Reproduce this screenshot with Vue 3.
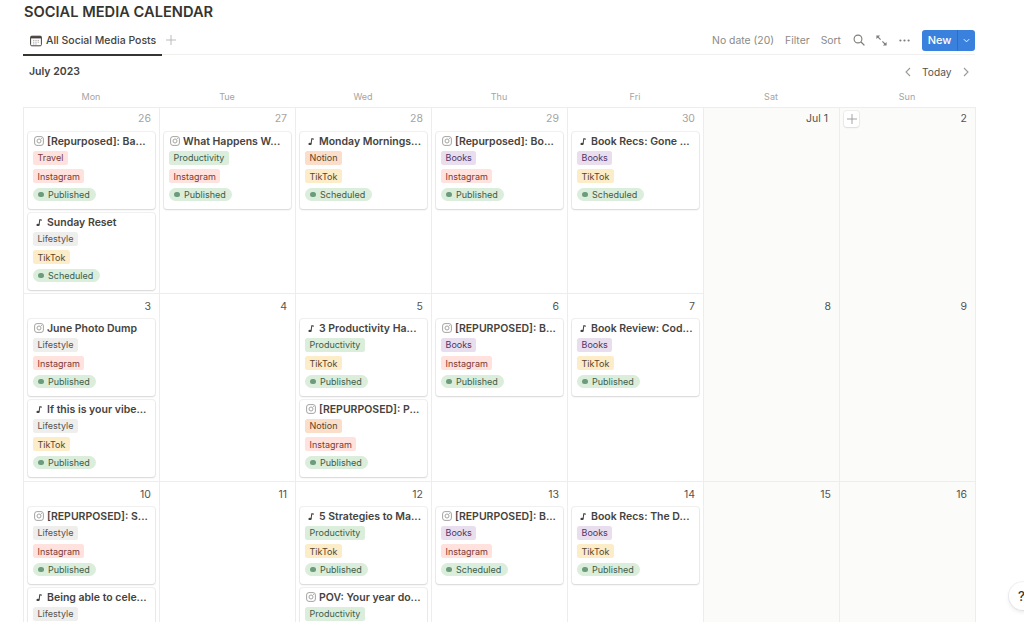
<script setup>
const p = (kind, title, topic, status = 'Published', channel = null) => ({
  kind, title, topic, status,
  channel: channel === null ? (kind === 'ig' ? 'Instagram' : 'TikTok') : channel
})

const tagClass = {
  Travel: 'red', Instagram: 'red', Productivity: 'green', Notion: 'orange',
  TikTok: 'yellow', Books: 'purple', Lifestyle: 'gray'
}

const weeks = [
  [
    { n: '26', muted: true, posts: [p('ig', '[Repurposed]: Ba...', 'Travel'), p('tt', 'Sunday Reset', 'Lifestyle', 'Scheduled')] },
    { n: '27', muted: true, posts: [p('ig', 'What Happens W...', 'Productivity')] },
    { n: '28', muted: true, posts: [p('tt', 'Monday Mornings...', 'Notion', 'Scheduled')] },
    { n: '29', muted: true, posts: [p('ig', '[Repurposed]: Bo...', 'Books')] },
    { n: '30', muted: true, posts: [p('tt', 'Book Recs: Gone ...', 'Books', 'Scheduled')] },
    { n: 'Jul 1', first: true, posts: [] },
    { n: '2', posts: [], add: true }
  ],
  [
    { n: '3', posts: [p('ig', 'June Photo Dump', 'Lifestyle'), p('tt', 'If this is your vibe...', 'Lifestyle')] },
    { n: '4', posts: [] },
    { n: '5', posts: [p('tt', '3 Productivity Ha...', 'Productivity'), p('ig', '[REPURPOSED]: P...', 'Notion')] },
    { n: '6', posts: [p('ig', '[REPURPOSED]: B...', 'Books')] },
    { n: '7', posts: [p('tt', 'Book Review: Cod...', 'Books')] },
    { n: '8', posts: [] },
    { n: '9', posts: [] }
  ],
  [
    { n: '10', posts: [p('ig', '[REPURPOSED]: S...', 'Lifestyle'), p('tt', 'Being able to cele...', 'Lifestyle', '', '')] },
    { n: '11', posts: [] },
    { n: '12', posts: [p('tt', '5 Strategies to Ma...', 'Productivity'), p('ig', 'POV: Your year do...', 'Productivity', '', '')] },
    { n: '13', posts: [p('ig', '[REPURPOSED]: B...', 'Books', 'Scheduled')] },
    { n: '14', posts: [p('tt', 'Book Recs: The D...', 'Books')] },
    { n: '15', posts: [] },
    { n: '16', posts: [] }
  ]
]
const days = ['Mon', 'Tue', 'Wed', 'Thu', 'Fri', 'Sat', 'Sun']
</script>

<template>
  <div class="page">
    <h1 class="title">SOCIAL MEDIA CALENDAR</h1>

    <div class="tabs">
      <div class="tab">
        <svg class="tab-icon" viewBox="0 0 12 12" width="12" height="12">
          <rect x="0.6" y="1.2" width="10.8" height="9.6" rx="1.2" fill="none" stroke="#45433e" stroke-width="1" />
          <rect x="0.6" y="1.2" width="10.8" height="2.2" fill="#45433e" />
          <path d="M3 5.4h1.4M5.3 5.4h1.4M7.6 5.4H9M3 7.2h1.4M5.3 7.2h1.4M7.6 7.2H9M3 9h1.4M5.3 9h1.4" stroke="#a9a8a5" stroke-width="0.9" />
        </svg>
        <span>All Social Media Posts</span>
      </div>
      <svg class="tab-plus" viewBox="0 0 10 10" width="10" height="10">
        <path d="M5 0v10M0 5h10" stroke="#b4b3b0" stroke-width="0.9" />
      </svg>
      <div class="tools">
        <span class="tool first">No date (20)</span>
        <span class="tool">Filter</span>
        <span class="tool">Sort</span>
        <svg class="ico search" viewBox="0 0 12 12" width="12" height="12">
          <circle cx="5" cy="5" r="3.9" fill="none" stroke="#7d7c78" stroke-width="1.1" />
          <path d="M8 8l3.4 3.4" stroke="#7d7c78" stroke-width="1.3" />
        </svg>
        <svg class="ico expand" viewBox="0 0 11 11" width="11" height="11">
          <path d="M1.5 1.5l3.1 3.1M6.4 6.4l3.1 3.1" stroke="#7d7c78" stroke-width="1.1" />
          <path d="M0.4 4.1V0.4h3.7zM10.6 6.9v3.7H6.9z" fill="#7d7c78" />
        </svg>
        <svg class="ico dots" viewBox="0 0 11 3" width="11" height="3">
          <circle cx="1.4" cy="1.5" r="1.1" fill="#7d7c78" />
          <circle cx="5.5" cy="1.5" r="1.1" fill="#7d7c78" />
          <circle cx="9.6" cy="1.5" r="1.1" fill="#7d7c78" />
        </svg>
        <div class="new">
          <span class="new-label">New</span>
          <span class="new-arrow">
            <svg viewBox="0 0 8 5" width="7" height="5">
              <path d="M1 1l3 3 3-3" fill="none" stroke="#fff" stroke-width="1.1" />
            </svg>
          </span>
        </div>
      </div>
    </div>

    <div class="month-row">
      <span class="month">July 2023</span>
      <div class="nav">
        <svg viewBox="0 0 6 10" width="6" height="10"><path d="M5 1L1 5l4 4" fill="none" stroke="#9b9a97" stroke-width="1.1" /></svg>
        <span class="today">Today</span>
        <svg viewBox="0 0 6 10" width="6" height="10"><path d="M1 1l4 4-4 4" fill="none" stroke="#9b9a97" stroke-width="1.1" /></svg>
      </div>
    </div>

    <div class="dow">
      <span v-for="d in days" :key="d">{{ d }}</span>
    </div>

    <div class="calendar">
      <div v-for="(week, w) in weeks" :key="w" class="week">
        <div v-for="(cell, c) in week" :key="cell.n" class="cell" :class="{ weekend: c > 4 }">
          <button v-if="cell.add" class="add" type="button">
            <svg viewBox="0 0 10 10" width="10" height="10"><path d="M5 0v10M0 5h10" stroke="#9b9a97" stroke-width="0.9" /></svg>
          </button>
          <div class="num" :class="{ muted: cell.muted, 'month-start': cell.first }">{{ cell.n }}</div>
          <div v-for="post in cell.posts" :key="post.title" class="card">
            <div class="card-title">
              <svg v-if="post.kind === 'ig'" class="kind" viewBox="0 0 10 10" width="10" height="10">
                <rect x="0.6" y="0.6" width="8.8" height="8.8" rx="2.4" fill="none" stroke="#9b9a97" stroke-width="0.9" />
                <circle cx="5" cy="5" r="2" fill="none" stroke="#9b9a97" stroke-width="0.9" />
                <circle cx="7.4" cy="2.6" r="0.5" fill="#9b9a97" />
              </svg>
              <svg v-else class="kind" viewBox="0 0 10 10" width="10" height="10">
                <path d="M4.6 7.8L5.3 2.2C6.1 2.2 7 2.3 7.8 2.6L7.6 3.9C7 3.7 6.5 3.6 6.2 3.6L5.6 7.9Z" fill="#45433e" />
                <ellipse cx="4" cy="7.9" rx="1.6" ry="1.2" fill="#45433e" />
              </svg>
              <span>{{ post.title }}</span>
            </div>
            <div class="props">
              <span class="tag" :class="tagClass[post.topic]">{{ post.topic }}</span>
              <span v-if="post.channel" class="tag" :class="tagClass[post.channel]">{{ post.channel }}</span>
              <span v-if="post.status" class="status"><i class="dot"></i>{{ post.status }}</span>
            </div>
          </div>
        </div>
      </div>
    </div>

    <div class="help">?</div>
  </div>
</template>

<style scoped>
.page {
  position: relative;
  width: 1024px;
  height: 622px;
  overflow: hidden;
  box-sizing: border-box;
  padding: 0 49px 0 23px;
  background: #fff;
  color: #37352f;
  font-family: Inter, "Liberation Sans", sans-serif;
}
.title {
  margin: 0 0 0 1px;
  height: 29px;
  font-size: 14.65px;
  line-height: 24px;
  font-weight: 600;
  letter-spacing: 0;
}
.tabs {
  display: flex;
  align-items: center;
  height: 26px;
  box-sizing: border-box;
  padding-bottom: 3px;
  border-bottom: 1.5px solid #f0f0ef;
}
.tab {
  display: flex;
  align-items: center;
  gap: 4px;
  align-self: stretch;
  width: 139px;
  box-sizing: border-box;
  padding: 0 0 1px 7px;
  margin-bottom: -4.5px;
  border-bottom: 2px solid #37352f;
  font-size: 10.5px;
  font-weight: 500;
  color: #45433e;
  white-space: nowrap;
}
.tab-plus { margin-left: 4px; }
.tools {
  margin-left: auto;
  display: flex;
  align-items: center;
  font-size: 10.4px;
  color: #8b8a86;
}
.tool { margin-right: 11px; white-space: nowrap; }
.ico { flex: none; }
.search { margin: 0 0 0 1px; }
.expand { margin-left: 11px; }
.dots { margin-left: 12px; }
.new {
  display: flex;
  align-items: stretch;
  height: 21px;
  width: 53px;
  margin-left: 12px;
  border-radius: 3px;
  background: #3a81dd;
  color: #fff;
  font-size: 11px;
  font-weight: 500;
}
.new-label {
  width: 35px;
  display: flex;
  align-items: center;
  justify-content: center;
  border-right: 1px solid #2f6fc2;
}
.new-arrow {
  flex: 1;
  display: flex;
  align-items: center;
  justify-content: center;
}
.month-row {
  display: flex;
  align-items: center;
  justify-content: space-between;
  height: 33px;
  padding: 0 6px 0 6px;
}
.month { font-size: 10.5px; font-weight: 600; color: #45433e; }
.nav {
  display: flex;
  align-items: center;
  gap: 11.5px;
  font-size: 10.2px;
  color: #55534e;
}
.dow {
  display: grid;
  grid-template-columns: repeat(7, 136px);
  height: 19px;
  font-size: 9px;
  line-height: 17px;
  color: #a5a4a1;
  text-align: center;
}
.calendar {
  border-top: 1px solid #ededec;
  border-right: 1px solid #ededec;
  box-sizing: border-box;
  width: 953px;
}
.week {
  display: grid;
  grid-template-columns: repeat(7, 136px);
  height: 188px;
  border-bottom: 1px solid #ededec;
  box-sizing: border-box;
}
.week:first-child { height: 186px; }
.cell {
  position: relative;
  border-left: 1px solid #ededec;
  padding: 0 4px;
  min-width: 0;
}
.weekend { background: #fbfbfa; }
.num {
  height: 24.5px;
  padding-right: 4px;
  font-size: 10.5px;
  line-height: 26px;
  text-align: right;
  color: #55534e;
}
.week:first-child .num { height: 23.5px; line-height: 21px; }
.muted { color: #a5a4a1; }
.num.month-start { padding-right: 7px; }
.add {
  position: absolute;
  left: 4px;
  top: 3px;
  width: 15px;
  height: 15.5px;
  padding: 0;
  display: flex;
  align-items: center;
  justify-content: center;
  background: #fff;
  border: 0;
  border-radius: 3px;
  box-shadow: 0 0 0 1px rgba(15, 15, 15, 0.05), 0 1px 2px rgba(15, 15, 15, 0.08);
}
.card {
  box-sizing: border-box;
  height: 77px;
  margin-bottom: 4px;
  padding: 0 5px;
  border-radius: 3px;
  background: #fff;
  box-shadow: 0 0 0 1px rgba(15, 15, 15, 0.06), 0 1px 2px rgba(15, 15, 15, 0.12);
}
.card-title {
  display: flex;
  align-items: center;
  height: 19.5px;
  padding-left: 1px;
  font-size: 10.5px;
  font-weight: 600;
  color: #45433e;
  white-space: nowrap;
}
.kind { flex: none; margin-right: 3px; }
.props {
  display: flex;
  flex-direction: column;
  align-items: flex-start;
  gap: 4.75px;
}
.tag, .status {
  display: flex;
  align-items: center;
  height: 13.5px;
  padding: 0 4.5px;
  border-radius: 2.5px;
  font-size: 9px;
  white-space: nowrap;
}
.red { background: #ffe2dd; color: #7a3b36; }
.green { background: #dbeddb; color: #3d5c4a; }
.orange { background: #fadec9; color: #5f4126; }
.yellow { background: #fdecc8; color: #57452a; }
.purple { background: #e8deee; color: #503566; }
.gray { background: #eeeeed; color: #55534e; }
.status {
  padding: 0 6.5px 0 5px;
  border-radius: 7px;
  background: #dbeddb;
  color: #3d5c4a;
  gap: 4.5px;
}
.dot {
  width: 5.5px;
  height: 5.5px;
  border-radius: 50%;
  background: #6c9b7d;
}
.help {
  position: absolute;
  left: 1009px;
  top: 582px;
  width: 28px;
  height: 28px;
  box-sizing: border-box;
  padding-left: 9px;
  border-radius: 50%;
  background: #fff;
  box-shadow: 0 0 0 1px rgba(15, 15, 15, 0.05), 0 2px 4px rgba(15, 15, 15, 0.1);
  font-size: 13px;
  font-weight: 500;
  line-height: 28px;
  color: #37352f;
}
</style>
